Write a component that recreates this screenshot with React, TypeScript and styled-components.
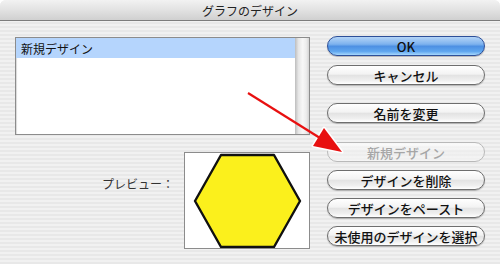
import styled, { createGlobalStyle } from 'styled-components';

const GlobalStyle = createGlobalStyle`
    html, body {
        margin: 0;
        padding: 0;
        background: #ffffff;
    }
    body {
        font-family: "Noto Sans CJK JP", "Liberation Sans", sans-serif;
    }
`

const Window = styled.div`
    width: 500px;
    height: 264px;
    position: relative;
    overflow: hidden;
    border-radius: 6px 6px 0 0;
    background: repeating-linear-gradient(to bottom, #f1f1f1 0px, #f1f1f1 2px, #e8e8e8 2px, #e8e8e8 4px);
`

const TitleBar = styled.div`
    height: 20px;
    border-bottom: 1px solid #7c7c7c;
    background: linear-gradient(to bottom, #f2f2f2 0%, #e2e2e2 50%, #d0d0d0 100%);
    display: flex;
    align-items: center;
    justify-content: center;
    font-size: 12px;
    color: #222;
    line-height: 1;
    padding-top: 1px;
    box-sizing: border-box;
    height: 21px;
`

const Body = styled.div`
    display: flex;
    padding: 15px 15px 0 15px;
    gap: 17px;
`

const LeftCol = styled.div`
    width: 295px;
    display: flex;
    flex-direction: column;
`

const ListBox = styled.div`
    margin-top: 1px;
    height: 98px;
    box-sizing: border-box;
    border: 1px solid #8c8c8c;
    background: #fff;
    display: flex;
    box-shadow: inset 1px 1px 1px rgba(0, 0, 0, 0.15);
`

const ListItems = styled.div`
    flex: 1;
`

const ListRow = styled.div<{ selected?: boolean }>`
    height: 20px;
    display: flex;
    align-items: center;
    padding-left: 5px;
    font-size: 12px;
    color: #111;
    background: ${p => (p.selected ? '#b5d5fd' : 'transparent')};
`

const ScrollTrack = styled.div`
    width: 14px;
    background: linear-gradient(to right, #bdbdbd 0%, #e6e6e6 25%, #f7f7f7 55%, #ececec 80%, #d4d4d4 100%);
`

const PreviewRow = styled.div`
    margin-top: 17px;
    display: flex;
    justify-content: flex-end;
    align-items: flex-start;
    gap: 10px;
`

const PreviewLabel = styled.div`
    margin-top: 23px;
    font-size: 12px;
    color: #333;
`

const PreviewBox = styled.div`
    width: 126px;
    height: 97px;
    box-sizing: border-box;
    border: 1px solid #8c8c8c;
    background: #fff;
    svg {
        display: block;
    }
`

const RightCol = styled.div`
    width: 158px;
    display: flex;
    flex-direction: column;
`

const Button = styled.div<{ gap: number; primary?: boolean; disabled?: boolean }>`
    margin-top: ${p => p.gap}px;
    height: 20px;
    box-sizing: border-box;
    border-radius: 10px;
    display: flex;
    align-items: center;
    justify-content: center;
    font-size: 13px;
    font-weight: 500;
    line-height: 1;
    color: ${p => (p.disabled ? '#a6a6a6' : '#111')};
    border: 1px solid ${p => (p.primary ? '#2d4f99' : p.disabled ? '#b9b9b9' : '#6e6e6e')};
    background: ${p =>
        p.primary
            ? 'linear-gradient(to bottom, #b4d4f7 0%, #7db2ee 40%, #4d90e3 52%, #5fa6ef 80%, #a6d8fd 100%)'
            : p.disabled
            ? 'linear-gradient(to bottom, rgba(255,255,255,0.7) 0%, rgba(240,240,240,0.5) 50%, rgba(248,248,248,0.6) 100%)'
            : 'linear-gradient(to bottom, #ffffff 0%, #f3f3f3 45%, #e3e3e3 52%, #efefef 80%, #ffffff 100%)'};
    box-shadow: ${p => (p.disabled ? 'none' : '0 1px 1px rgba(0, 0, 0, 0.25)')};
`

const ArrowLayer = styled.svg`
    position: absolute;
    left: 0;
    top: 0;
    pointer-events: none;
`

const buttons = [
    { id: 'ok', label: 'OK', gap: 0, primary: true },
    { id: 'cancel', label: 'キャンセル', gap: 9 },
    { id: 'rename', label: '名前を変更', gap: 18 },
    { id: 'new', label: '新規デザイン', gap: 19, disabled: true },
    { id: 'delete', label: 'デザインを削除', gap: 8 },
    { id: 'paste', label: 'デザインをペースト', gap: 8 },
    { id: 'unused', label: '未使用のデザインを選択', gap: 8 },
]

const App = () => {
    return (
        <>
            <GlobalStyle />
            <Window>
                <TitleBar>グラフのデザイン</TitleBar>
                <Body>
                    <LeftCol>
                        <ListBox>
                            <ListItems>
                                <ListRow selected>新規デザイン</ListRow>
                            </ListItems>
                            <ScrollTrack />
                        </ListBox>
                        <PreviewRow>
                            <PreviewLabel>プレビュー：</PreviewLabel>
                            <PreviewBox>
                                <svg width="124" height="95" viewBox="0 0 124 95">
                                    <polygon
                                        points="36,2 89,2 115,48 89,94 36,94 10,48"
                                        fill="#fbf01c"
                                        stroke="#111"
                                        strokeWidth="2.4"
                                        strokeLinejoin="round"
                                    />
                                </svg>
                            </PreviewBox>
                        </PreviewRow>
                    </LeftCol>
                    <RightCol>
                        {buttons.map(b => (
                            <Button key={b.id} gap={b.gap} primary={b.primary} disabled={b.disabled}>
                                {b.label}
                            </Button>
                        ))}
                    </RightCol>
                </Body>
                {/* 赤い矢印 */}
                <ArrowLayer width="500" height="264" viewBox="0 0 500 264">
                    <g stroke="#fff" strokeWidth="3" strokeLinejoin="round" fill="#fff">
                        <polygon points="342,152 313,146 324,128" />
                    </g>
                    <line x1="248" y1="93" x2="320" y2="138" stroke="#e81010" strokeWidth="2.2" />
                    <polygon points="342,152 313,146 324,128" fill="#e81010" />
                </ArrowLayer>
            </Window>
        </>
    )
}

export default App
